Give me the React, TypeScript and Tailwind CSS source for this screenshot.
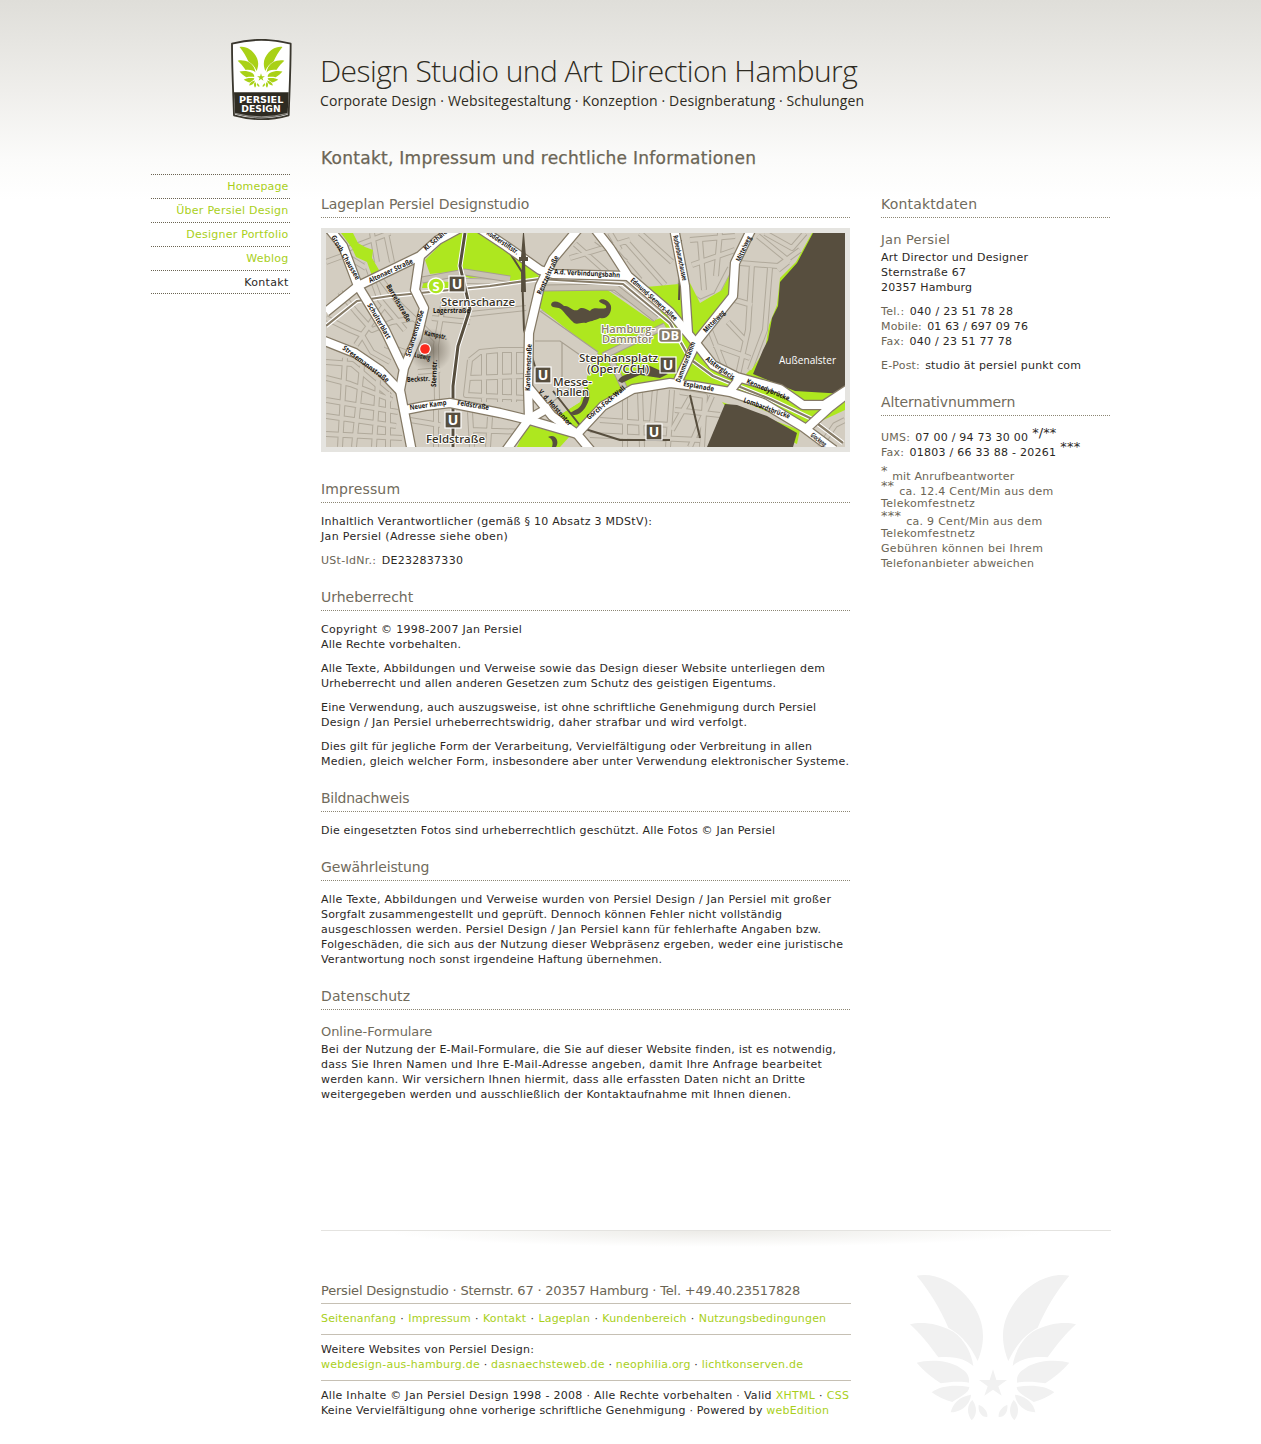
import React, { useLayoutEffect, useRef, useState } from "react";

/** A single line of text, tracked so that it fills the given measure. */
function Line({ w, className = "", children }: { w: number; className?: string; children: React.ReactNode }) {
  const ref = useRef<HTMLSpanElement>(null);
  const [spacing, setSpacing] = useState(0);
  useLayoutEffect(() => {
    const el = ref.current;
    if (!el) return;
    const natural = el.getBoundingClientRect().width;
    setSpacing((w - 0.8 - natural) / (el.textContent || " ").length);
  }, [w]);
  return (
    <div className={"whitespace-nowrap " + className}>
      <span ref={ref} style={{ letterSpacing: spacing }}>
        {children}
      </span>
    </div>
  );
}

function H2({ w, children, first = false }: { w: number; children: string; first?: boolean }) {
  return (
    <h2
      className={
        (first ? "" : "mt-5 ") +
        "h-[23px] border-b border-dotted border-[#8c8674] text-[14px] leading-[18px] text-[#716b5c]"
      }
    >
      <Line w={w}>{children}</Line>
    </h2>
  );
}

function H3({ w, children }: { w: number; children: string }) {
  return (
    <h3 className="mt-[13px] mb-px text-[13px] leading-[18px] text-[#716b5c]">
      <Line w={w}>{children}</Line>
    </h3>
  );
}

type Row = [number, React.ReactNode];

function Paragraph({ rows, className = "" }: { rows: Row[]; className?: string }) {
  return (
    <div className={className}>
      {rows.map(([w, text], i) => (
        <Line key={i} w={w}>
          {text}
        </Line>
      ))}
    </div>
  );
}

const Muted = ({ children }: { children: string }) => <span className="mr-[1.5px] text-[#6b6555]">{children}</span>;
const A = ({ children }: { children: string }) => (
  <a href="#" className="text-[#a9cf1a]">
    {children}
  </a>
);

function WingHalf() {
  return (
    <>
      <path d="M50 32C150 15 250 120 249 212C249 245 240 270 233 288C215 250 190 212 145 188C120 130 90 80 50 32Z" />
      <path d="M30 178C60 170 110 172 160 200C195 225 215 265 220 303C200 285 170 272 115 277C85 235 60 205 30 178Z" />
      <path d="M50 293C80 285 140 282 180 308C198 320 209 328 207 353C185 348 150 350 122 355C95 337 72 318 50 293Z" />
      <path d="M95 382C120 362 165 358 208 366C207 385 180 395 157 411C135 405 112 395 95 382Z" />
      <path d="M152 442C158 415 178 395 213 389C212 408 195 440 152 442Z" />
      <path d="M215 466C200 448 200 420 217 405C232 425 232 450 215 466Z" />
      <path d="M262 456C245 457 233 440 236 419C252 425 264 440 262 456Z" />
    </>
  );
}

function Wings() {
  return (
    <g>
      <WingHalf />
      <g transform="translate(558 0) scale(-1 1)">
        <WingHalf />
      </g>
      <path d="M279 313L289 345H321L295 364L305 392L279 374L253 392L263 364L237 345H269Z" />
    </g>
  );
}

function Logo() {
  return (
    <svg width="62" height="82" viewBox="33 26 186 246" className="block">
      <path d="M36 40Q124 17 212 40C212 120 208 190 206 255Q124 278 42 255C40 190 36 120 36 40Z" fill="#fff" stroke="#3a372e" strokeWidth="5.500" strokeLinejoin="round" />
      <path d="M42 186H206L203 251Q124 274 45 251Z" fill="#2e2b22" />
      <path d="M45 249Q124 270 203 249" fill="none" stroke="#c9c7c1" strokeWidth="2" />
      <g transform="translate(44.6 41) scale(0.281)" fill="#a9d117">
        <Wings />
      </g>
      <g fill="#fff" fontFamily="DejaVu Sans" fontWeight="700" fontSize="24">
        <text x="57" y="218" textLength="133" lengthAdjust="spacingAndGlyphs">PERSIEL</text>
        <text x="64" y="244" textLength="118" lengthAdjust="spacingAndGlyphs">DESIGN</text>
      </g>
    </svg>
  );
}

const alleys = [
  "M326 262L345 255L366 268M345 250L390 233M366 262L380 300L405 330M386 233L392 262M372 233L377 262",
  "M340 292L356 312L372 330L392 322L415 318M326 318L350 330L362 335L384 306M356 345L378 312M362 335L372 352L390 362",
  "M380 278L400 305L422 326L436 340M385 345L405 352M326 362L352 364L390 396M326 378L350 384L392 400",
  "M345 358L340 447M362 366L354 447M378 380L374 447M326 400L398 412M326 416L396 426M326 434L402 438M388 392L388 447",
  "M444 300L436 345L437 400M432 318L470 322M418 372L440 370M470 360L480 352L500 350L526 350M468 378L526 376M484 352L484 402M500 348L500 402M470 360L466 395L526 398M514 352L514 402",
  "M410 420L440 425M436 410L436 447M470 412L472 447M490 417L488 447M470 430L526 432M430 280L510 282L526 276M470 314L526 308",
  "M540 312L570 330L600 352L612 366M596 240L626 262M570 258L630 240M575 244L610 275M600 233L640 280M625 240L665 285M640 233L672 262M610 233L620 250",
  "M545 292L605 290L655 320M605 358L650 334L665 328M535 340L560 342L590 362M560 342L560 380M575 350L575 378M612 366L625 395L625 447M600 420L670 425M640 392L642 447M590 435L700 440M672 390L668 447M655 388L652 424",
  "M690 240L735 236M692 265L735 250M700 240L704 290M720 233L716 276M676 285L700 302L716 295L730 268",
  "M752 264L748 330L738 375M770 268L765 330L750 370M740 263L778 266L800 250M758 236L790 262M765 233L792 248L805 233M735 300L752 305M714 345L750 358M710 330L725 368M728 322L745 340M788 262L778 270",
  "M680 392L705 396L702 447M690 398L672 430M712 396L690 447M675 410L720 415",
  "M820 447L835 425L845 420",
];

const roads = [
  "M326 312L358 286L420 256L438 240L460 228",
  "M327 226L343 246L358 286L385 330L403 368",
  "M420 256L415 290L424 308L417 338L404 368L400 390L412 452",
  "M322 340L355 353L380 370L401 392",
  "M405 410L425 406L450 403L500 413L529 420L577 434",
  "M584 222L553 259L540 286L529 333L528 386L529 419L505 452",
  "M476 226L506 246L540 270L553 274L628 276",
  "M588 220L610 248L628 276L670 312L695 342L713 365L737 377L780 389L803 405L824 405L850 388",
  "M674 228L685 286L688 333",
  "M752 228L735 263L733 296L697 341L678 381",
  "M577 434L603 406L633 389L670 383L695 386L730 392L763 403L803 427L834 450",
  "M740 378L730 391",
  "M848 393L830 407L806 429",
  "M529 388L552 416L577 434L592 452",
  "M529 419L550 407",
];

type Label = [number, number, number, number, string];
const streets: Label[] = [
  [331, 237, 60, 50, "Grosb. Chaussee"],
  [370, 283, -25, 48, "Altonaer Straße"],
  [426, 251, -40, 30, "Kl. Schäfe."],
  [386, 286, 60, 42, "Bartelsstraße"],
  [367, 305, 60, 40, "Schulterblatt"],
  [342, 349, 37, 56, "Stresemannstraße"],
  [410, 357, -73, 48, "Schanzenstraße"],
  [433, 313, 0, 37, "Lagerstraße"],
  [424, 335, 12, 23, "Kampstr."],
  [414, 357, 12, 16, "Ludwig"],
  [407, 382, -3, 23, "Beckstr."],
  [436, 387, -88, 27, "Sternstr."],
  [410, 410, -8, 37, "Neuer Kamp"],
  [457, 405, 9, 32, "Feldstraße"],
  [486, 234, 34, 37, "Rodderstiftstr."],
  [541, 295, -65, 42, "Rentzelstraße"],
  [554, 274, 3, 66, "A.d. Verbindungsbahn"],
  [630, 281, 42, 60, "Edmund-Siemers-Allee"],
  [530, 391, -88, 47, "Karolinenstraße"],
  [538, 392, 48, 46, "V. d. Holstentor"],
  [589, 420, -40, 48, "Gorch-Fock-Wall"],
  [673, 236, 78, 46, "Rothenbaumchaussee"],
  [740, 262, -65, 27, "Mittelweg"],
  [706, 333, -46, 28, "Mittelweg"],
  [680, 383, -69, 43, "Dammtordamm"],
  [705, 360, 36, 34, "Alsterglacis"],
  [683, 386, 10, 31, "Esplanade"],
  [746, 383, 23, 46, "Kennedybrücke"],
  [743, 402, 20, 49, "Lombardsbrücke"],
  [810, 436, 38, 19, "Glockeng."],
];

const stations: [number, number][] = [
  [457, 284],
  [453, 420],
  [543, 375],
  [668, 365],
  [654, 432],
];

const places: Label[] = [
  [441, 306, 0, 74, "Sternschanze"],
  [426, 443, 0, 59, "Feldstraße"],
  [579, 362, 0, 79, "Stephansplatz"],
  [587, 373, 0, 62, "(Oper/CCH)"],
  [553, 386, 0, 39, "Messe-"],
  [556, 396, 0, 33, "hallen"],
];

function CityMap() {
  return (
    <svg width="519" height="214" viewBox="326 233 519 214" className="block overflow-hidden">
      <defs>
        <radialGradient id="spot">
          <stop offset="0" stopColor="#6f675a" stopOpacity="0.8" />
          <stop offset="1" stopColor="#6f675a" stopOpacity="0" />
        </radialGradient>
      </defs>
      <rect x="326" y="233" width="519" height="214" fill="#d3cdc1" />
      <g fill="none" strokeLinejoin="round">
        {alleys.map((d) => (
          <path key={d} d={d} stroke="#b0a99b" strokeWidth="6" />
        ))}
        {alleys.map((d) => (
          <path key={d} d={d} stroke="#d3cdc1" strokeWidth="4" />
        ))}
      </g>
      <g fill="#aee71f">
        <path d="M341 233H353L358 243L365 247L373 250L372 258L379 270L372 276L367 262L356 257L352 248Z" />
        <path d="M425 260L452 233H487L524 262L541 278L510 282L503 276L470 278L450 272L430 274Z" />
        <path d="M422 288L424 280L450 282L448 288Z" />
        <path d="M541 291L606 289L652 321L664 317L646 287L690 283L700 303L722 290L731 272L732 298L697 342L678 380L630 389L603 406L577 432L545 424L580 402L590 366L602 357L540 308Z" />
        <path d="M527 425L570 436L560 447H517Z" />
        <path d="M693 350L738 380L728 388L674 380Z" />
        <path d="M738 382L750 370L845 398V410L806 428L735 398Z" />
        <path d="M812 233L796 262L780 278L777 305L769 325L765 350L748 375L760 382L845 397L838 233Z" />
        <path d="M722 402L800 430L797 444L730 412Z" />
      </g>
      <g fill="none">
        <path d="M541 288L615 287L656 319M603 356L665 326M612 362L628 396M422 280L465 272L510 279" stroke="#a79f90" strokeWidth="7" />
        <path d="M541 288L615 287L656 319M603 356L665 326M612 362L628 396M422 280L465 272L510 279" stroke="#c9c2b5" strokeWidth="5" />
      </g>
      <path d="M540 311L598 352L590 366L580 402L545 424L532 410V330Z" fill="#d3cdc1" />
      <path d="M540 311L598 352M535 341L560 341L590 362M562 342V378M545 408L580 380" fill="none" stroke="#a79f90" strokeWidth="1.2" />
      <path d="M570 425L590 398L594 370L612 372L622 392L600 406L578 430Z" fill="#aee71f" />
      <g fill="#574e3e">
        <path d="M813 233H845V394L795 391L753 374L763 350L768 340L772 318L778 306L780 282L797 263Z" />
        <path d="M725 404L737 405L767 416L797 433L793 447H707Z" />
        <path d="M551 305C552 299 560 302 564 306C570 305 572 312 578 310C581 306 586 309 590 311C594 306 600 310 606 308C608 304 600 304 599 301C601 297 609 300 611 306C612 313 607 320 600 318C594 321 590 321 586 323C580 322 578 325 574 323C570 319 567 316 562 310C558 306 553 309 551 305Z" />
        <path d="M587 387C592 393 589 402 585 408C580 415 574 417 570 413C576 409 581 409 583 400Z" />
        <path d="M618 381C620 375 628 375 634 371L650 366L668 374L660 378L640 375L630 379L622 383Z" />
        <path d="M548 437C555 433 560 441 556 447H552C554 441 551 438 548 437Z" />
      </g>
      <g fill="none" strokeLinejoin="round">
        <path d="M326 326L357 301L390 296L420 293L490 286L540 279L623 284L670 323L690 359L713 376L770 399L810 418L843 443" stroke="#fff" strokeWidth="4.5" />
        <path d="M326 326L357 301L390 296L420 293L490 286L540 279L623 284L670 323L690 359L713 376L770 399L810 418L843 443" stroke="#877c68" strokeWidth="2.2" />
        <path d="M465 233L460 266L470 309L458 346L453 386V447" stroke="#fff" strokeWidth="5" />
        <path d="M465 233L460 266L470 309L458 346L453 386V447" stroke="#574e3e" strokeWidth="3" />
        <path d="M553 391L582 428L620 440L670 440M690 395L700 438M508 250L522 272L524 330L536 370M681 240L679 300" stroke="#574e3e" strokeWidth="2" />
      </g>
      <g fill="none" strokeLinejoin="round">
        {roads.map((d) => (
          <path key={d} d={d} stroke="#857a66" strokeWidth="10.5" />
        ))}
        {roads.map((d) => (
          <path key={d} d={d} stroke="#fff" strokeWidth="8" />
        ))}
      </g>
      <path d="M523 233H524L526 257H528V261H525L526 292H521L522 261H519V257H521Z" fill="#574e3e" />
      <circle cx="430" cy="350" r="22" fill="url(#spot)" />
      <g fontFamily="Open Sans" fontWeight="700" fontSize="7" fill="#17140f">
        {streets.map(([x, y, r, w, t], i) => (
          <text key={i} transform={`translate(${x} ${y}) rotate(${r})`} textLength={w} lengthAdjust="spacingAndGlyphs">
            {t}
          </text>
        ))}
      </g>
      <circle cx="425" cy="349" r="6" fill="#fff" />
      <circle cx="425" cy="349" r="4.8" fill="#fb2a1d" />
      <g fontFamily="Open Sans" fontWeight="700">
        {stations.map(([x, y]) => (
          <g key={x}>
            <rect x={x - 8} y={y - 8} width="16" height="16" fill="#574e3e" stroke="#fff" strokeWidth="1.2" />
            <text x={x} y={y + 5} textAnchor="middle" fontSize="14" fill="#fff">
              U
            </text>
          </g>
        ))}
        <circle cx="436" cy="286" r="8" fill="#aee71f" stroke="#fff" strokeWidth="1.5" />
        <text x="436" y="291" textAnchor="middle" fontSize="13" fill="#fff">
          S
        </text>
        <rect x="658.500" y="328.500" width="23" height="14" rx="3" fill="#887d69" stroke="#fff" strokeWidth="1.5" />
        <text x="670" y="340" textAnchor="middle" fontSize="12" fill="#fff" textLength="18" lengthAdjust="spacingAndGlyphs">
          DB
        </text>
      </g>
      <g fontFamily="Open Sans" fontWeight="600" fontSize="11.5" fill="#3b3529" stroke="#fff" strokeWidth="2" strokeLinejoin="round" paintOrder="stroke">
        {places.map(([x, y, , w, t]) => (
          <text key={t} x={x} y={y} textLength={w} lengthAdjust="spacingAndGlyphs">
            {t}
          </text>
        ))}
        <g fill="#8a7f6b">
          <text x="601" y="333" textLength="54" lengthAdjust="spacingAndGlyphs">Hamburg-</text>
          <text x="602" y="343" textLength="51" lengthAdjust="spacingAndGlyphs">Dammtor</text>
        </g>
      </g>
      <text x="779" y="364" fontFamily="Open Sans" fontSize="11" fill="#fff" textLength="57" lengthAdjust="spacingAndGlyphs">
        Außenalster
      </text>
    </svg>
  );
}

const nav: [string, number][] = [
  ["Homepage", 62],
  ["Über Persiel Design", 113],
  ["Designer Portfolio", 103],
  ["Weblog", 43],
  ["Kontakt", 45],
];

function Nav() {
  return (
    <nav className="mt-[174px] h-[120px] w-[139px] border-b border-dotted border-[#6b6453]">
      {nav.map(([label, w]) => (
        <a
          key={label}
          href="#"
          className={
            "flex h-6 justify-end border-t border-dotted border-[#6b6453] pr-[1.5px] leading-[23px] " +
            (label === "Kontakt" ? "text-[#2b281f]" : "text-[#a9cf1a]")
          }
        >
          <Line w={w}>{label}</Line>
        </a>
      ))}
    </nav>
  );
}

function Footnote({ mark, markW, w, children, className = "" }: { mark: string; markW: number; w: number; children: string; className?: string }) {
  return (
    <div className={"flex gap-[5px] " + className}>
      <Line w={markW} className="relative -top-1.5 text-[13px]">
        {mark}
      </Line>
      <Line w={w}>{children}</Line>
    </div>
  );
}

export default function App() {
  return (
    <div className="h-[1444px] overflow-hidden bg-white bg-[linear-gradient(to_bottom,#dfded9_0px,#efeeeb_90px,#fbfbfa_160px,#ffffff_200px)] bg-no-repeat font-['DejaVu_Sans',sans-serif] text-[11px] leading-[15px] text-[#2b281f]">
      <div className="ml-[151px] flex w-[960px]">
        <Nav />
        <div className="ml-[31px] w-[790px]">
          <header className="flex h-[195px]">
            <div className="-ml-[90px] w-[89px] shrink-0 pt-[38.5px]">
              <Logo />
            </div>
            <div className="shrink-0 font-['Open_Sans',sans-serif] text-[#2e2b22]">
              <div className="mt-[50px] h-[42px] text-[30px] leading-[42px] font-light">
                <Line w={538}>Design Studio und Art Direction Hamburg</Line>
              </div>
              <div className="h-5 text-[14px] leading-[17px]">
                <Line w={545}>Corporate Design · Websitegestaltung · Konzeption · Designberatung · Schulungen</Line>
              </div>
              <h1 className="mt-[34px] ml-px font-['DejaVu_Sans',sans-serif] text-[17px] leading-6 text-[#6b6555] [-webkit-text-stroke:0.25px_#6b6555]">
                <Line w={436}>Kontakt, Impressum und rechtliche Informationen</Line>
              </h1>
            </div>
          </header>

          <div className="flex h-[1035px] gap-[31px]">
            <main className="w-[529px]">
              <H2 first w={209}>Lageplan Persiel Designstudio</H2>
              <div className="mt-2.5 mb-7 border-[5px] border-[#e5e4e0]">
                <CityMap />
              </div>

              <H2 first w={80}>Impressum</H2>
              <div className="mt-[11px] space-y-[9px]">
                <Paragraph
                  rows={[
                    [332, "Inhaltlich Verantwortlicher (gemäß § 10 Absatz 3 MDStV):"],
                    [188, "Jan Persiel (Adresse siehe oben)"],
                  ]}
                />
                <Paragraph rows={[[143, <><Muted>USt-IdNr.:</Muted> DE232837330</>]]} />
              </div>

              <H2 w={93}>Urheberrecht</H2>
              <div className="mt-[11px] space-y-[9px]">
                <Paragraph
                  rows={[
                    [202, "Copyright © 1998-2007 Jan Persiel"],
                    [141, "Alle Rechte vorbehalten."],
                  ]}
                />
                <Paragraph
                  rows={[
                    [505, "Alle Texte, Abbildungen und Verweise sowie das Design dieser Website unterliegen dem"],
                    [456, "Urheberrecht und allen anderen Gesetzen zum Schutz des geistigen Eigentums."],
                  ]}
                />
                <Paragraph
                  rows={[
                    [496, "Eine Verwendung, auch auszugsweise, ist ohne schriftliche Genehmigung durch Persiel"],
                    [427, "Design / Jan Persiel urheberrechtswidrig, daher strafbar und wird verfolgt."],
                  ]}
                />
                <Paragraph
                  rows={[
                    [492, "Dies gilt für jegliche Form der Verarbeitung, Vervielfältigung oder Verbreitung in allen"],
                    [529, "Medien, gleich welcher Form, insbesondere aber unter Verwendung elektronischer Systeme."],
                  ]}
                />
              </div>

              <H2 w={89}>Bildnachweis</H2>
              <Paragraph
                className="mt-[11px]"
                rows={[[455, "Die eingesetzten Fotos sind urheberrechtlich geschützt. Alle Fotos © Jan Persiel"]]}
              />

              <H2 w={109}>Gewährleistung</H2>
              <Paragraph
                className="mt-[11px]"
                rows={[
                  [511, "Alle Texte, Abbildungen und Verweise wurden von Persiel Design / Jan Persiel mit großer"],
                  [462, "Sorgfalt zusammengestellt und geprüft. Dennoch können Fehler nicht vollständig"],
                  [501, "ausgeschlossen werden. Persiel Design / Jan Persiel kann für fehlerhafte Angaben bzw."],
                  [523, "Folgeschäden, die sich aus der Nutzung dieser Webpräsenz ergeben, weder eine juristische"],
                  [342, "Verantwortung noch sonst irgendeine Haftung übernehmen."],
                ]}
              />

              <H2 w={90}>Datenschutz</H2>
              <H3 w={112}>Online-Formulare</H3>
              <Paragraph
                rows={[
                  [516, "Bei der Nutzung der E-Mail-Formulare, die Sie auf dieser Website finden, ist es notwendig,"],
                  [502, "dass Sie Ihren Namen und Ihre E-Mail-Adresse angeben, damit Ihre Anfrage bearbeitet"],
                  [485, "werden kann. Wir versichern Ihnen hiermit, dass alle erfassten Daten nicht an Dritte"],
                  [471, "weitergegeben werden und ausschließlich der Kontaktaufnahme mit Ihnen dienen."],
                ]}
              />
            </main>

            <aside className="w-[229px]">
              <H2 first w={97}>Kontaktdaten</H2>
              <H3 w={70}>Jan Persiel</H3>
              <div className="space-y-[9px]">
                <Paragraph
                  rows={[
                    [148, "Art Director und Designer"],
                    [86, "Sternstraße 67"],
                    [92, "20357 Hamburg"],
                  ]}
                />
                <Paragraph
                  rows={[
                    [133, <><Muted>Tel.:</Muted> 040 / 23 51 78 28</>],
                    [148, <><Muted>Mobile:</Muted> 01 63 / 697 09 76</>],
                    [132, <><Muted>Fax:</Muted> 040 / 23 51 77 78</>],
                  ]}
                />
                <Paragraph rows={[[201, <><Muted>E-Post:</Muted> studio ät persiel punkt com</>]]} />
              </div>

              <H2 w={135}>Alternativnummern</H2>
              <div className="mt-3.5 flex gap-1">
                <Line w={148}><Muted>UMS:</Muted> 07 00 / 94 73 30 00</Line>
                <Line w={25} className="relative -top-[5px] text-[13px]">*/**</Line>
              </div>
              <div className="flex gap-1">
                <Line w={176}><Muted>Fax:</Muted> 01803 / 66 33 88 - 20261</Line>
                <Line w={21} className="relative -top-1.5 text-[13px]">***</Line>
              </div>
              <div className="mt-[9px] text-[#6b6555]">
                <Footnote mark="*" markW={7} w={123}>mit Anrufbeantworter</Footnote>
                <Footnote mark="**" markW={14} w={155}>ca. 12.4 Cent/Min aus dem</Footnote>
                <Line w={95} className="-mt-[3px]">Telekomfestnetz</Line>
                <Footnote mark="***" markW={21} w={137} className="mt-[3px]">ca. 9 Cent/Min aus dem</Footnote>
                <Line w={95} className="-mt-[3px]">Telekomfestnetz</Line>
                <Line w={163}>Gebühren können bei Ihrem</Line>
                <Line w={154}>Telefonanbieter abweichen</Line>
              </div>
            </aside>
          </div>

          <footer>
            <div className="h-px bg-[#e4e3e0]" />
            <div className="h-4 bg-[radial-gradient(ellipse_42%_100%_at_50%_0%,#ecebe7,#ffffff)]" />
            <div className="flex justify-between">
              <div className="w-[530px] divide-y divide-[#c6c0b4] pt-[35px]">
                <div className="h-[22px] text-[13px] leading-[18px] text-[#6b6555]">
                  <Line w={480}>Persiel Designstudio · Sternstr. 67 · 20357 Hamburg · Tel. +49.40.23517828</Line>
                </div>
                <div className="h-[31px] pt-[7px] [word-spacing:0.6px]">
                  <Line w={506}>
                    <A>Seitenanfang</A> · <A>Impressum</A> · <A>Kontakt</A> · <A>Lageplan</A> · <A>Kundenbereich</A> · <A>Nutzungsbedingungen</A>
                  </Line>
                </div>
                <div className="h-[46px] pt-[7px]">
                  <Line w={214}>Weitere Websites von Persiel Design:</Line>
                  <Line w={483}>
                    <A>webdesign-aus-hamburg.de</A> · <A>dasnaechsteweb.de</A> · <A>neophilia.org</A> · <A>lichtkonserven.de</A>
                  </Line>
                </div>
                <div className="h-[46px] pt-[7px]">
                  <Line w={529}>
                    Alle Inhalte © Jan Persiel Design 1998 - 2008 · Alle Rechte vorbehalten · Valid <A>XHTML</A> · <A>CSS</A>
                  </Line>
                  <Line w={509}>
                    Keine Vervielfältigung ohne vorherige schriftliche Genehmigung · Powered by <A>webEdition</A>
                  </Line>
                </div>
              </div>
              <svg width="190" height="165" viewBox="0 0 570 495" fill="#f1f1f1" className="mt-[18px] mr-[21px] block">
                <Wings />
              </svg>
            </div>
          </footer>
        </div>
      </div>
    </div>
  );
}
